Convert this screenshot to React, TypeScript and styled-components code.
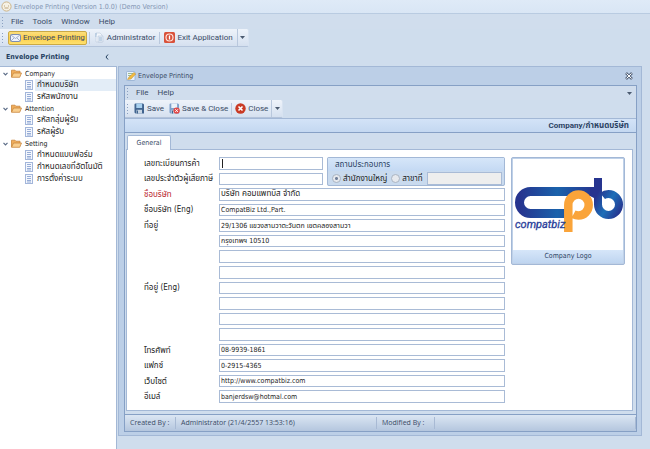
import React from 'react';
import styled, { createGlobalStyle } from 'styled-components';

const ui = 'Roboto, "Open Sans", "Noto Sans Thai", sans-serif';
const tahoma = '"DejaVu Sans Condensed", "DejaVu Sans", "Noto Sans Thai", sans-serif';
const line = '#a3b8d6';
const ink = '#3a4b66';

const Global = createGlobalStyle`
  * { box-sizing: border-box; }
  body { margin: 0; background: #cfdded; }
  button, input { font: inherit; color: inherit; margin: 0; }
`;

const Page = styled.div`
  min-height: 100vh;
  display: flex;
  flex-direction: column;
  background: #cfdded;
  color: ${ink};
  font: 8px/12px ${ui};
`;

const AppTitle = styled.header`
  height: 14px;
  flex: none;
  display: flex;
  align-items: center;
  gap: 2px;
  padding-left: 1px;
  color: #8496b3;
  border-bottom: 1px solid #b9cbe1;
  background: linear-gradient(#dfeaf7, #d9e6f5);
  font: 7px/12px ${tahoma};
`;

const MenuBar = styled.nav<{ $inner?: boolean }>`
  height: ${p => (p.$inner ? 14 : 15)}px;
  flex: none;
  display: flex;
  align-items: center;
  gap: 9px;
  padding-left: 2px;
  background: #d0dded;
`;

const MenuItem = styled.button`
  border: 0;
  padding: 0;
  background: none;
  line-height: 12px;
`;

const Grip = styled.span<{ $tool?: boolean }>`
  width: 1px;
  height: 10px;
  flex: none;
  margin-right: ${p => (p.$tool ? 3 : -1)}px;
  background: repeating-linear-gradient(#8ba0c0 0 1px, transparent 1px 3px);
`;

const MenuDrop = styled(MenuItem)`
  margin-left: auto;
  padding-right: 4px;
  display: flex;
`;

const ToolBar = styled.div<{ $inner?: boolean }>`
  height: 18px;
  flex: none;
  align-self: flex-start;
  display: flex;
  align-items: center;
  gap: ${p => (p.$inner ? 1 : 2)}px;
  padding-left: 2px;
  border-bottom: 1px solid #b3c3da;
  border-right: 1px solid #d8e3f1;
  border-radius: 0 2px 2px 0;
  background: linear-gradient(#eef3fa, #dfe8f4 60%, #d5e0ef);
`;

const ToolButton = styled.button<{ $active?: boolean }>`
  height: 14px;
  display: flex;
  align-items: center;
  gap: 2px;
  padding: 0 1px;
  border: 1px solid ${p => (p.$active ? '#cba945' : 'transparent')};
  border-radius: 2px;
  background: ${p => (p.$active ? 'linear-gradient(#fbdf7e, #fdd04c 50%, #fee06e)' : 'none')};
  white-space: nowrap;
  line-height: 12px;
`;

const Split = styled.span`
  width: 1px;
  height: 12px;
  flex: none;
  background: #b9c8dd;
`;

const ToolDrop = styled.button`
  width: 11px;
  align-self: stretch;
  display: flex;
  align-items: center;
  justify-content: center;
  padding: 0;
  border: 0;
  border-left: 1px solid #b9c8dd;
  background: none;
`;

const Body = styled.div`
  flex: 1;
  display: grid;
  grid-template-columns: 117px 1fr;
`;

const Side = styled.aside`
  display: flex;
  flex-direction: column;
`;

const SideTitle = styled.h2`
  height: 19px;
  margin: 0;
  padding: 0 8px 0 6px;
  display: flex;
  align-items: center;
  justify-content: space-between;
  font: bold 7px/12px ${tahoma};
  color: #24405f;
`;

const Collapse = styled.button`
  display: flex;
  padding: 0;
  border: 0;
  background: none;
`;

const Tree = styled.ul`
  flex: 1;
  margin: 0;
  padding: 1px 0 0;
  list-style: none;
  border: 1px solid ${line};
  border-left: 0;
  border-bottom: 0;
  background: #fff;
  font: 8px/12px ${tahoma};
  color: #1d1d1d;
`;

const Branch = styled.ul`
  margin: 0;
  padding: 0;
  list-style: none;
`;

const Folder = styled.button`
  height: 11px;
  display: flex;
  align-items: center;
  gap: 3px;
  padding: 0 0 0 3px;
  border: 0;
  background: none;
  font-size: 7px;
`;

const Leaf = styled.button<{ $selected?: boolean }>`
  width: 100%;
  height: 12px;
  display: flex;
  align-items: center;
  gap: 2px;
  padding: 0 0 0 25px;
  border: 0;
  background: none;
  text-align: left;
  line-height: 12px;
  & > span {
    flex: 1;
    padding-left: 2px;
    white-space: nowrap;
    background: ${p => (p.$selected ? '#e3edf7' : 'none')};
  }
`;

const Desk = styled.main`
  display: flex;
  flex-direction: column;
  padding: 19px 8px 13px 1px;
`;

const Win = styled.section`
  flex: 1;
  display: flex;
  flex-direction: column;
  padding: 0 4px 3px 5px;
  border: 1px solid ${line};
  background: #bccfe7;
`;

const WinTitle = styled.header`
  height: 18px;
  display: flex;
  align-items: center;
  gap: 2px;
  padding: 0 4px 0 2px;
  font: 7px/12px ${tahoma};
  & > button { margin-left: auto; }
`;

const WinBody = styled.div`
  flex: 1;
  display: flex;
  flex-direction: column;
  border: 1px solid #86a0c5;
  background: #cfdded;
`;

const Crumb = styled.h1`
  height: 15px;
  flex: none;
  margin: 0;
  padding-right: 7px;
  border-top: 1px solid ${line};
  border-bottom: 1px solid #86a0c5;
  background: linear-gradient(#d3e3f7, #c4d8f1);
  font: bold 8px/13px ${ui};
  text-align: right;
  color: #2b4263;
`;

const Tabs = styled.div`
  display: flex;
  padding: 2px 0 0 2px;
`;

const Tab = styled.button`
  height: 15px;
  width: 44px;
  margin-bottom: -1px;
  padding: 0;
  z-index: 1;
  border: 1px solid ${line};
  border-bottom: 0;
  border-radius: 2px 2px 0 0;
  background: #fff;
  font: 7px/12px ${tahoma};
`;

const Sheet = styled.div`
  flex: 1;
  display: flex;
  align-items: stretch;
  gap: 6px;
  margin: 0 3px 3px 1px;
  padding: 7px 7px 7px 17px;
  border: 1px solid ${line};
  background: #fff;
  font: 8px/11px ${tahoma};
  color: #1a1a1a;
`;

const Fields = styled.div`
  flex: 1;
  display: grid;
  grid-template-columns: 75px 104px 1fr;
  grid-auto-rows: 1fr;
  row-gap: 3px;
`;

const Label = styled.label<{ $required?: boolean }>`
  grid-column: 1;
  align-self: center;
  height: 11px;
  white-space: nowrap;
  color: ${p => (p.$required ? '#b8242c' : 'inherit')};
`;

const Field = styled.input<{ $short?: boolean; $caret?: boolean; $thai?: boolean }>`
  grid-column: 2 / ${p => (p.$short ? 3 : 4)};
  min-width: 0;
  width: 100%;
  height: 100%;
  padding: 0 1px;
  border: 1px solid #a9bbd6;
  border-radius: 0;
  outline: 0;
  font-size: ${p => (p.$thai ? 8 : 7)}px;
  background: ${p => (p.$caret ? 'linear-gradient(#222, #222) 2px 1px / 1px 9px no-repeat #fff' : '#fff')};
`;

const Group = styled.fieldset`
  grid-column: 3;
  grid-row: 1 / 3;
  display: flex;
  flex-direction: column;
  min-width: 0;
  margin: 0 0 -1px 4px;
  padding: 0;
  border: 1px solid ${line};
  border-radius: 2px;
  background: #c9daee;
`;

const GroupTitle = styled.div`
  height: 13px;
  padding-left: 7px;
  line-height: 13px;
  background: linear-gradient(#d6e6f9, #c4d9f3);
  color: #2b4263;
`;

const GroupRow = styled.div`
  flex: 1;
  display: flex;
  align-items: center;
  gap: 4px;
  padding: 0 2px 0 4px;
`;

const Choice = styled.label`
  display: flex;
  align-items: center;
  gap: 2px;
  white-space: nowrap;
`;

const Radio = styled.input`
  appearance: none;
  width: 9px;
  height: 9px;
  flex: none;
  border: 1px solid #aab4c2;
  border-radius: 50%;
  background: #e6e9ee;
  &:checked { background: radial-gradient(#71809a 0 1px, #e6e9ee 2px); }
`;

const BranchNo = styled.input`
  flex: 1;
  min-width: 0;
  height: 13px;
  padding: 0 1px;
  border: 1px solid #a9bbd6;
  background: #eee;
`;

const LogoCard = styled.figure`
  width: 114px;
  flex: none;
  align-self: flex-start;
  margin: 0;
  border: 1px solid ${line};
  border-radius: 2px;
  background: #bfd1e8;
  padding: 1px;
  & > svg { display: block; width: 100%; height: 91px; background: #fff; }
`;

const Caption = styled.figcaption`
  height: 13px;
  font-size: 7px;
  line-height: 13px;
  text-align: center;
  background: linear-gradient(#d6e6f9, #bfd5f0);
  color: #2b4263;
`;

const Status = styled.footer`
  height: 17px;
  flex: none;
  display: grid;
  grid-template-columns: 51px 1fr 58px 201px;
  align-items: center;
  border-top: 1px solid #86a0c5;
  background: linear-gradient(#dbe6f3, #b4c6de);
  font: 7px/12px "Open Sans", sans-serif;
  & > span {
    padding-left: 5px;
    min-height: 12px;
    white-space: nowrap;
    border-right: 1px solid #a8bad4;
  }
`;

const Down = () => (
  <svg width="5" height="3" viewBox="0 0 5 3"><path d="M0 0h5L2.5 3z" fill="#4b5a70" /></svg>
);

const Coin = () => (
  <svg width="11" height="11" viewBox="0 0 11 11">
    <circle cx="5.500" cy="5.500" r="4.600" fill="#f6f1e4" stroke="#cdb488" />
    <path d="M3.500 4.500v1M7.500 4.500v1M3.500 7h4" stroke="#bda47c" fill="none" />
  </svg>
);

const Mail = () => (
  <svg width="11" height="9" viewBox="0 0 11 9">
    <rect x=".5" y="1.5" width="10" height="7" rx="1" fill="#eef2fb" stroke="#7d8db0" />
    <path d="M1 2l4.500 3.500L10 2M1 8l3-3M10 8L7 5" fill="none" stroke="#8d9cbd" strokeWidth=".8" />
  </svg>
);

const Users = () => (
  <svg width="11" height="11" viewBox="0 0 11 11">
    <path d="M2 1h4l2 2v7H2z" fill="#f3f7fc" stroke="#c2cfdf" strokeWidth=".7" />
    <path d="M4 4h5v6H4z" fill="#e3ebf5" stroke="#b9c8da" strokeWidth=".6" />
    <path d="M1 2h2M1 4h1.500M5 6h3M5 8h3" stroke="#8fb0d0" strokeWidth=".8" />
  </svg>
);

const Power = () => (
  <svg width="11" height="11" viewBox="0 0 11 11">
    <rect width="11" height="11" rx="1.500" fill="#d9513a" />
    <circle cx="5.500" cy="5.500" r="3.500" fill="none" stroke="#ffe3dc" strokeWidth="1.200" />
    <path d="M5.500 3.500v4" stroke="#fff" strokeWidth="1.300" />
  </svg>
);

const FolderIcon = () => (
  <svg width="11" height="9" viewBox="0 0 11 9">
    <path d="M.5 8V1.200h3.500l1 1h4V4" fill="#f0ae5c" stroke="#c9873c" strokeWidth=".8" />
    <path d="M.5 8.300L2.500 4h8L8.700 8.300z" fill="#f9cf8f" stroke="#c9873c" strokeWidth=".8" />
  </svg>
);

const PageIcon = () => (
  <svg width="8" height="10" viewBox="0 0 8 10">
    <rect x=".5" y=".5" width="7" height="9" fill="#f4f7fd" stroke="#a3b6da" />
    <path d="M2 2.500h4M2 4.500h4M2 6.500h4M2 8h4" stroke="#7f99cc" strokeWidth=".8" />
  </svg>
);

const Chevron = () => (
  <svg width="5" height="4" viewBox="0 0 5 4"><path d="M.5.8l2 2 2-2" fill="none" stroke="#5a6b86" strokeWidth="1.200" /></svg>
);

const Note = () => (
  <svg width="10" height="10" viewBox="0 0 10 10">
    <rect x=".5" y=".5" width="8.500" height="9" rx="1" fill="#e8f1fb" stroke="#92add0" strokeWidth=".8" />
    <path d="M2 2.500h5M2 4.500h3" stroke="#8cb07a" strokeWidth=".8" />
    <path d="M1.500 8.500L3 6l5-4.500L9.700 3 5 8z" fill="#f3bc3f" stroke="#b98a35" strokeWidth=".5" />
  </svg>
);

const Disk = ({ closing }: { closing?: boolean }) => (
  <svg width="11" height="11" viewBox="0 0 11 11">
    <path d="M.5 1.500a1 1 0 011-1h7.500l1 1v9H1.500l-1-1z" fill={closing ? '#7da0cb' : '#41648f'} />
    <rect x="2.300" y=".5" width="5.800" height="4.500" fill={closing ? '#eaf3fb' : '#a9d0ee'} />
    <rect x="2.500" y="6.800" width="5.500" height="3.700" fill="#c8d6e4" />
    <path d="M3.500 7.500v3" stroke="#41648f" />
    {closing && (
      <g>
        <circle cx="7.600" cy="7.600" r="3.200" fill="#e04a4a" />
        <path d="M6.300 6.300l2.600 2.600M8.900 6.300L6.300 8.900" stroke="#fff" />
      </g>
    )}
  </svg>
);

const CloseIcon = () => (
  <svg width="11" height="11" viewBox="0 0 11 11">
    <circle cx="5.500" cy="5.500" r="5.200" fill="#c93a24" />
    <path d="M3.500 3.500l4 4M7.500 3.500l-4 4" stroke="#fff" strokeWidth="1.600" />
  </svg>
);

const Logo = () => (
  <svg viewBox="0 0 110 91" role="img" aria-label="compatbiz">
    <defs>
      <linearGradient id="bar" x1="0" x2="1">
        <stop offset="0" stopColor="#26348f" />
        <stop offset=".5" stopColor="#1a62ab" />
        <stop offset="1" stopColor="#26348f" />
      </linearGradient>
      <linearGradient id="bowl" x1="0" y1="0" x2="1" y2="1">
        <stop offset=".2" stopColor="#26348f" />
        <stop offset=".6" stopColor="#1d6fb8" />
        <stop offset="1" stopColor="#26348f" />
      </linearGradient>
    </defs>
    <path d="M82 32.500H17.500a11 11 0 000 22H53" fill="none" stroke="url(#bar)" strokeWidth="9" />
    <path d="M77 28h6v12l-6-3z" fill="#26348f" />
    <path d="M85 19v26.500a10.500 10.500 0 1 0 10.500-10.500c-2.500 0-4.500.8-6 2" fill="none" stroke="url(#bowl)" strokeWidth="8" />
    <circle cx="65.500" cy="46" r="8" fill="#fff" />
    <path d="M55.300 73V46a10.200 10.500 0 1 1 10.200 10.500c-2 0-3.500-.4-5-1.200" fill="none" stroke="#faa43a" strokeWidth="8.500" />
    <text x="2" y="69" fontFamily="'Liberation Sans Narrow', Roboto, sans-serif" fontSize="11" fontStyle="italic" fill="#29409a" stroke="#29409a" strokeWidth=".3">compatbiz</text>
  </svg>
);

const tree = [
  { name: 'Company', items: ['กำหนดบริษัท', 'รหัสพนักงาน'] },
  { name: 'Attention', items: ['รหัสกลุ่มผู้รับ', 'รหัสผู้รับ'] },
  { name: 'Setting', items: ['กำหนดแบบฟอร์ม', 'กำหนดเลขที่อัตโนมัติ', 'การตั้งค่าระบบ'] },
];

const rows: { label?: string; name: string; value?: string; required?: boolean; thai?: boolean }[] = [
  { label: 'ชื่อบริษัท', name: 'ชื่อบริษัท', value: 'บริษัท คอมแพทบิส จำกัด', required: true, thai: true },
  { label: 'ชื่อบริษัท (Eng)', name: 'ชื่อบริษัท (Eng)', value: 'CompatBiz Ltd.,Part.' },
  { label: 'ที่อยู่', name: 'ที่อยู่', value: '29/1306 แขวงสามวาตะวันตก เขตคลองสามวา' },
  { name: 'ที่อยู่ 2', value: 'กรุงเทพฯ 10510' },
  { name: 'ที่อยู่ 3' },
  { name: 'ที่อยู่ 4' },
  { label: 'ที่อยู่ (Eng)', name: 'ที่อยู่ (Eng)' },
  { name: 'ที่อยู่ (Eng) 2' },
  { name: 'ที่อยู่ (Eng) 3' },
  { name: 'ที่อยู่ (Eng) 4' },
  { label: 'โทรศัพท์', name: 'โทรศัพท์', value: '08-9939-1861' },
  { label: 'แฟกซ์', name: 'แฟกซ์', value: '0-2915-4365' },
  { label: 'เว็บไซต์', name: 'เว็บไซต์', value: 'http://www.compatbiz.com' },
  { label: 'อีเมล์', name: 'อีเมล์', value: 'banjerdsw@hotmal.com' },
];

export default function App() {
  return (
    <Page>
      <Global />
      <AppTitle><Coin />Envelope Printing (Version 1.0.0) (Demo Version)</AppTitle>
      <MenuBar>
        <Grip />
        {['File', 'Tools', 'Window', 'Help'].map(m => <MenuItem key={m}>{m}</MenuItem>)}
      </MenuBar>
      <ToolBar>
        <Grip $tool />
        <ToolButton $active><Mail />Envelope Printing</ToolButton>
        <Split />
        <ToolButton><Users />Administrator</ToolButton>
        <Split />
        <ToolButton><Power />Exit Application</ToolButton>
        <ToolDrop aria-label="More"><Down /></ToolDrop>
      </ToolBar>
      <Body>
        <Side>
          <SideTitle>
            Envelope Printing
            <Collapse aria-label="Collapse">
              <svg width="4" height="6" viewBox="0 0 4 6"><path d="M3 .5L1 3l2 2.500" fill="none" stroke="#24405f" /></svg>
            </Collapse>
          </SideTitle>
          <Tree>
            {tree.map((g, gi) => (
              <li key={g.name}>
                <Folder><Chevron /><FolderIcon />{g.name}</Folder>
                <Branch>
                  {g.items.map((item, i) => (
                    <li key={item}><Leaf $selected={gi === 0 && i === 0}><PageIcon /><span>{item}</span></Leaf></li>
                  ))}
                </Branch>
              </li>
            ))}
          </Tree>
        </Side>
        <Desk>
          <Win>
            <WinTitle>
              <Note />Envelope Printing
              <Collapse aria-label="Close window">
                <svg width="8" height="8" viewBox="0 0 8 8">
                  <path d="M1 1l6 6M7 1L1 7" stroke="#5c6a80" strokeWidth="2.600" />
                  <path d="M1.500 1.500l5 5M6.500 1.500l-5 5" stroke="#fff" />
                </svg>
              </Collapse>
            </WinTitle>
            <WinBody>
              <MenuBar $inner>
                <Grip />
                <MenuItem>File</MenuItem>
                <MenuItem>Help</MenuItem>
                <MenuDrop aria-label="Menu options"><Down /></MenuDrop>
              </MenuBar>
              <ToolBar $inner>
                <Grip $tool />
                <ToolButton><Disk />Save</ToolButton>
                <ToolButton><Disk closing />Save &amp; Close</ToolButton>
                <Split />
                <ToolButton><CloseIcon />Close</ToolButton>
                <ToolDrop aria-label="More"><Down /></ToolDrop>
              </ToolBar>
              <Crumb>Company/กำหนดบริษัท</Crumb>
              <Tabs role="tablist"><Tab role="tab" aria-selected>General</Tab></Tabs>
              <Sheet>
                <Fields>
                  <Label htmlFor="reg">เลขทะเบียนการค้า</Label>
                  <Field id="reg" $short $caret />
                  <Group aria-labelledby="place">
                    <GroupTitle id="place">สถานประกอบการ</GroupTitle>
                    <GroupRow>
                      <Choice><Radio type="radio" name="office" defaultChecked />สำนักงานใหญ่</Choice>
                      <Choice><Radio type="radio" name="office" />สาขาที่</Choice>
                      <BranchNo aria-label="สาขาที่" disabled />
                    </GroupRow>
                  </Group>
                  <Label htmlFor="tax">เลขประจำตัวผู้เสียภาษี</Label>
                  <Field id="tax" $short />
                  {rows.map((r, i) => (
                    <React.Fragment key={r.name}>
                      {r.label && <Label htmlFor={`f${i}`} $required={r.required}>{r.label}</Label>}
                      <Field id={`f${i}`} aria-label={r.name} defaultValue={r.value} $thai={r.thai} />
                    </React.Fragment>
                  ))}
                </Fields>
                <LogoCard>
                  <Logo />
                  <Caption>Company Logo</Caption>
                </LogoCard>
              </Sheet>
              <Status>
                <span>Created By :</span>
                <span>Administrator (21/4/2557 13:53:16)</span>
                <span>Modified By :</span>
                <span />
              </Status>
            </WinBody>
          </Win>
        </Desk>
      </Body>
    </Page>
  );
}
